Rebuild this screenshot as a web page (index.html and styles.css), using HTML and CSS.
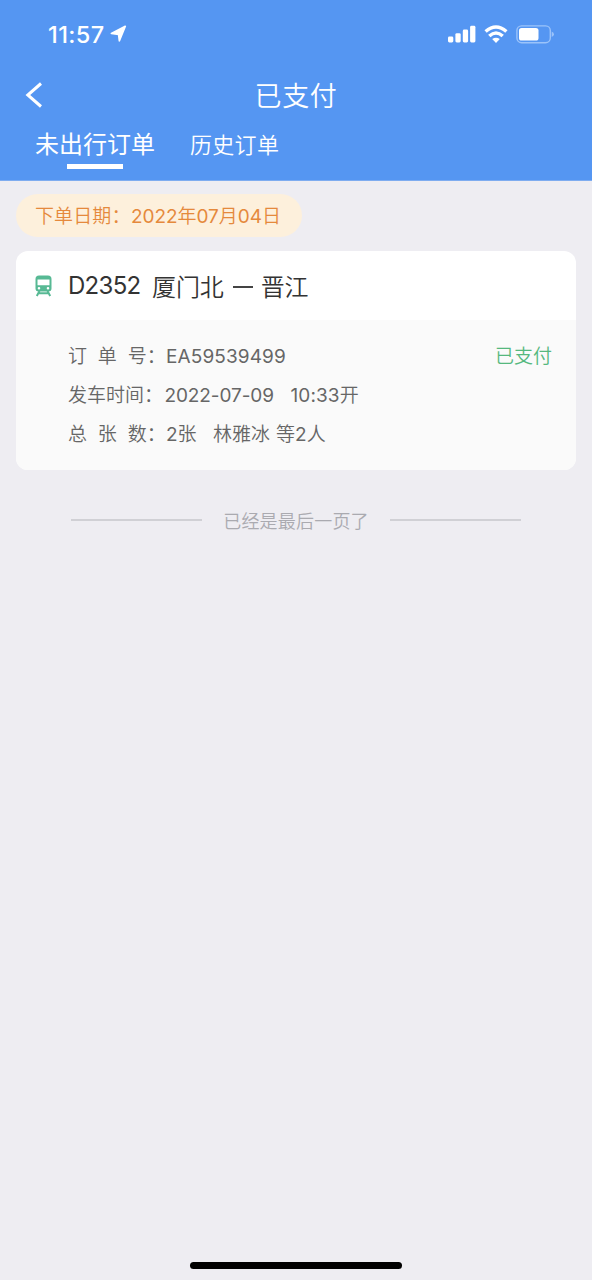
FILE: index.html
```html
<!DOCTYPE html>
<html lang="zh-CN">
<head>
<meta charset="utf-8">
<title>已支付</title>
<link rel="stylesheet" href="styles.css">
</head>
<body>
<div class="app">
  <header class="header">
    <div class="status">
      <span class="time">11:57</span>
      <svg class="location" width="17" height="18" viewBox="0 0 17 18"><path d="M15.3 1.3 9.4 15.8 8.6 9.3 1.4 8.4Z" fill="#fff" stroke="#fff" stroke-width="1.7" stroke-linejoin="round"/></svg>
      <svg class="signal" width="28" height="18" viewBox="0 0 28 18" fill="#fff"><rect x="0" y="11.5" width="5.3" height="6" rx="1.4"/><rect x="7.4" y="8.2" width="5.3" height="9.3" rx="1.4"/><rect x="14.8" y="4.5" width="5.3" height="13" rx="1.4"/><rect x="22.1" y="0.8" width="5.3" height="16.7" rx="1.4"/></svg>
      <svg class="wifi" width="24" height="18" viewBox="0 0 24 18" fill="none" stroke="#fff" stroke-width="3.5"><path d="M1.6 6.5Q12-2.4 22.4 6.5"/><path d="M5.3 11Q12 5 18.7 11"/><path d="M12 18 8.2 14.1Q12 11.2 15.8 14.1Z" fill="#fff" stroke="none"/></svg>
      <svg class="battery" width="38" height="19" viewBox="0 0 38 19"><rect x=".9" y=".9" width="33.4" height="16.8" rx="4.7" fill="none" stroke="#9bc3fa" stroke-width="1.4"/><rect x="3" y="3" width="19.5" height="12.6" rx="2.6" fill="#fff"/><path d="M35.7 6.6Q38 7.5 38 9.3T35.7 12Z" fill="#9bc3fa"/></svg>
    </div>
    <div class="navbar">
      <svg class="back" width="18" height="26" viewBox="0 0 18 26"><path d="M16 1.5 2.8 13 16 24.5" fill="none" stroke="#fff" stroke-width="3"/></svg>
      <h1 class="title">已支付</h1>
    </div>
    <nav class="tabs">
      <a class="tab active">未出行订单</a>
      <a class="tab">历史订单</a>
    </nav>
  </header>
  <main class="content">
    <div class="date"><span class="date-label">下单日期：</span><span class="date-value"><em>2022</em>年<em>07</em>月<em>04</em>日</span></div>
    <section class="card">
      <div class="card-head">
        <svg class="train" width="17" height="22" viewBox="0 0 17 22"><path fill="#57b994" fill-rule="evenodd" d="M4 .5H13Q16.5.5 16.5 4V13.5Q16.5 16.5 13.5 16.5H3.5Q.5 16.5.5 13.5V4Q.5.5 4 .5ZM2.5 4.5V10.2H14.5V4.5ZM4 12A1.3 1.3 0 1 0 4 14.6 1.3 1.3 0 1 0 4 12ZM13 12A1.3 1.3 0 1 0 13 14.6 1.3 1.3 0 1 0 13 12Z"/><path d="M4.5 16 1.8 21M12.5 16 15.2 21M3.5 18.3H13.5" fill="none" stroke="#57b994" stroke-width="2"/></svg>
        <span class="train-no"><em>D2352</em></span>
        <span class="route">厦门北</span><span class="dash"></span><span class="route">晋江</span>
      </div>
      <div class="card-body">
        <div class="row"><span class="label">订<span class="gap"></span>单<span class="gap"></span>号：</span><span class="value code"><em>EA59539499</em></span><span class="paid">已支付</span></div>
        <div class="row"><span class="label narrow">发车时间：</span><span class="value day"><em>2022-07-09</em></span><span class="value clock"><em>10:33</em>开</span></div>
        <div class="row"><span class="label">总<span class="gap"></span>张<span class="gap"></span>数：</span><span class="value count"><em>2</em>张</span><span class="value">林雅冰</span><span class="value others">等<em>2</em>人</span></div>
      </div>
    </section>
    <div class="end"><span class="rule"></span><span class="end-text">已经是最后一页了</span><span class="rule"></span></div>
  </main>
  <div class="home"></div>
</div>
</body>
</html>
```
FILE: styles.css
```css
* { box-sizing: border-box; }
body {
  margin: 0;
  background: #eeedf2;
  font-family: Inter, "Noto Sans CJK SC", sans-serif;
  font-weight: 350;
}
em { font-style: normal; font-weight: 400; }
.app { width: 592px; height: 1280px; display: flex; flex-direction: column; overflow: hidden; }
.header { height: 181px; background: #5596f2; border-bottom: 1px solid #7eacf0; color: #fff; }
.status { height: 68px; display: flex; align-items: center; padding: 0 38px 0 48px; }
.time { width: 62px; font-size: 23.5px; font-weight: 500; letter-spacing: .4px; white-space: nowrap; }
.signal { margin-left: auto; }
.wifi { margin-left: 8px; }
.battery { margin-left: 8px; }
.navbar { height: 54px; position: relative; display: flex; align-items: center; justify-content: center; }
.back { position: absolute; left: 25px; top: 14px; }
.title { margin: 0; padding-top: 3px; font-size: 27px; line-height: 54px; font-weight: 350; letter-spacing: .6px; }
.tabs { display: flex; gap: 35px; padding-left: 35px; }
.tab { height: 47px; line-height: 46px; font-size: 22px; letter-spacing: .3px; }
.tab.active { display: flex; flex-direction: column; align-items: center; font-size: 24px; font-weight: 400; letter-spacing: 0; }
.tab.active::after { content: ""; width: 56px; height: 5px; margin-top: -4px; background: #fff; }
.content { flex: 1; padding: 13px 16px 0; }
.date { display: flex; width: 286px; height: 43px; padding-left: 19px; border-radius: 22px; background: #fdf0dc; color: #e5893c; font-size: 19px; line-height: 45px; white-space: nowrap; }
.date-label { width: 96px; letter-spacing: .1px; }
.date-value { letter-spacing: -.05px; }
.card { margin-top: 14px; height: 219px; border-radius: 12px; background: #fff; overflow: hidden; }
.card-head { height: 69px; display: flex; align-items: center; padding-left: 19px; color: #333; font-size: 24px; }
.train-no { width: 84px; margin-left: 16px; letter-spacing: -.7px; }
.route { margin-top: -1px; letter-spacing: -.1px; }
.dash { width: 20px; height: 2px; margin: 2px 8px 0 9px; background: #444; }
.card-body { height: 150px; padding: 17px 24px 0 52px; background: #fafafa; color: #666; font-size: 19px; }
.row { height: 39px; display: flex; line-height: 40px; white-space: nowrap; }
.label { width: 98px; flex: none; }
.label.narrow { width: 96.5px; }
.gap { display: inline-block; width: 10.8px; }
.code { letter-spacing: .1px; }
.day { width: 126px; letter-spacing: -.1px; }
.clock { letter-spacing: .1px; }
.count { width: 47px; }
.others { margin-left: 6px; }
.paid { margin-left: auto; color: #55b87e; }
.end { display: flex; align-items: center; justify-content: space-between; padding: 0 55px; height: 40px; margin-top: 30px; color: #aaaab0; font-size: 18px; letter-spacing: .2px; }
.rule { width: 131px; height: 2px; margin-top: -1px; background: #d0d0d5; }
.home { align-self: center; width: 212px; height: 7px; margin: 0 0 11px; border-radius: 4px; background: #000; }
```
